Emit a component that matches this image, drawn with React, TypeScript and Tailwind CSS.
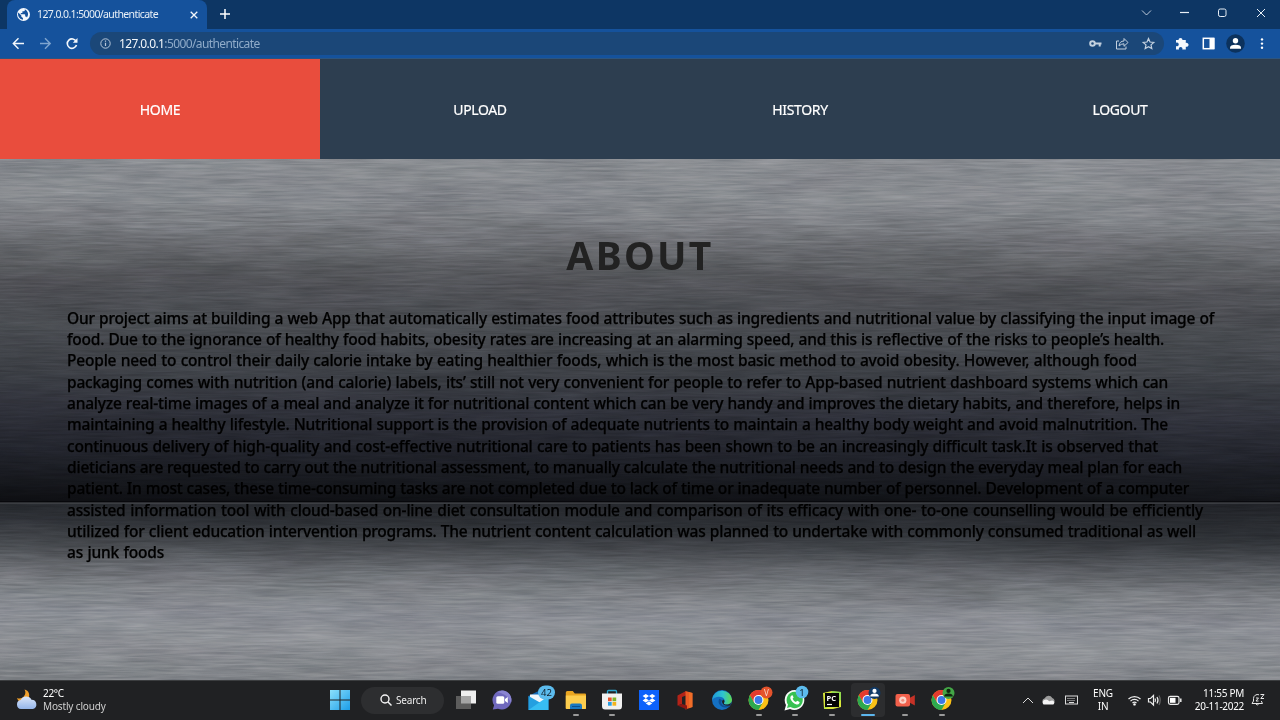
import React from "react";

type Line = [text: string, width: string];

const ABOUT_LINES: Line[] = [
  ["Our project aims at building a web App that automatically estimates food attributes such as ingredients and nutritional value by classifying the input image of", "w-[1147px]"],
  ["food. Due to the ignorance of healthy food habits, obesity rates are increasing at an alarming speed, and this is reflective of the risks to people’s health.", "w-[1097px]"],
  ["People need to control their daily calorie intake by eating healthier foods, which is the most basic method to avoid obesity. However, although food", "w-[1070px]"],
  ["packaging comes with nutrition (and calorie) labels, its’ still not very convenient for people to refer to App-based nutrient dashboard systems which can", "w-[1101px]"],
  ["analyze real-time images of a meal and analyze it for nutritional content which can be very handy and improves the dietary habits, and therefore, helps in", "w-[1113px]"],
  ["maintaining a healthy lifestyle. Nutritional support is the provision of adequate nutrients to maintain a healthy body weight and avoid malnutrition. The", "w-[1101px]"],
  ["continuous delivery of high-quality and cost-effective nutritional care to patients has been shown to be an increasingly difficult task.It is observed that", "w-[1091px]"],
  ["dieticians are requested to carry out the nutritional assessment, to manually calculate the nutritional needs and to design the everyday meal plan for each", "w-[1115px]"],
  ["patient. In most cases, these time-consuming tasks are not completed due to lack of time or inadequate number of personnel. Development of a computer", "w-[1122px]"],
  ["assisted information tool with cloud-based on-line diet consultation module and comparison of its efficacy with one- to-one counselling would be efficiently", "w-[1136px]"],
  ["utilized for client education intervention programs. The nutrient content calculation was planned to undertake with commonly consumed traditional as well", "w-[1129px]"],
  ["as junk foods", "w-[97px]"],
];

function BrushedMetal() {
  return (
    <svg className="block h-[521px] w-[1280px] [grid-area:1/1]" viewBox="0 0 1280 521" preserveAspectRatio="none">
      <defs>
        <linearGradient id="metal" gradientUnits="userSpaceOnUse" x1="0" y1="-6" x2="0" y2="340" gradientTransform="skewY(0.5)">
          <stop offset="0" stopColor="#898c91" />
          <stop offset="0.13" stopColor="#84878c" />
          <stop offset="0.21" stopColor="#74767b" />
          <stop offset="0.3" stopColor="#5e6064" />
          <stop offset="0.38" stopColor="#4f5055" />
          <stop offset="0.5" stopColor="#474a4f" />
          <stop offset="0.62" stopColor="#3d4046" />
          <stop offset="0.74" stopColor="#2f313a" />
          <stop offset="0.86" stopColor="#20222a" />
          <stop offset="0.95" stopColor="#15171c" />
          <stop offset="1" stopColor="#0d0e12" />
        </linearGradient>
        <linearGradient id="metalLow" gradientUnits="userSpaceOnUse" x1="0" y1="330" x2="0" y2="516" gradientTransform="skewY(0.8)">
          <stop offset="0" stopColor="#212328" />
          <stop offset="0.16" stopColor="#2d3035" />
          <stop offset="0.27" stopColor="#44474c" />
          <stop offset="0.38" stopColor="#606368" />
          <stop offset="0.5" stopColor="#7b7e83" />
          <stop offset="0.65" stopColor="#8a8d94" />
          <stop offset="0.8" stopColor="#8c8f94" />
          <stop offset="1" stopColor="#7f8287" />
        </linearGradient>
        <filter id="brush" x="0" y="0" width="100%" height="100%" colorInterpolationFilters="sRGB">
          <feTurbulence type="fractalNoise" baseFrequency="0.024 0.45" numOctaves="3" seed="4" />
          <feColorMatrix values="1.1 0.1 0 0 -0.1  1.05 0.1 0.05 0 -0.1  1.05 0.1 0.05 0 -0.1  0 0 0 0 1" />
        </filter>
        <filter id="cloud" x="0" y="0" width="100%" height="100%" colorInterpolationFilters="sRGB">
          <feTurbulence type="fractalNoise" baseFrequency="0.008 0.04" numOctaves="3" seed="9" />
          <feColorMatrix values="1 0.1 0 0 -0.05  1 0 0.1 0 -0.05  1 0 0 0 0  0 0 0 0 1" />
        </filter>
      </defs>
      <rect width="1280" height="345" fill="url(#metal)" />
      <rect y="344" width="1280" height="177" fill="url(#metalLow)" />
      <rect width="667" height="521" filter="url(#brush)" className="opacity-15 mix-blend-overlay" />
      <rect x="667" width="613" height="521" filter="url(#brush)" className="opacity-15 mix-blend-overlay" />
      <rect width="1280" height="521" filter="url(#cloud)" className="opacity-10 mix-blend-overlay" />
      <rect y="342" width="1280" height="1.500" fill="#030406" opacity="0.6" />
      <rect y="343.500" width="1280" height="1" fill="#55585b" opacity="0.9" />
      <rect y="43" width="667" height="1" fill="#969a9e" opacity="0.25" />
    </svg>
  );
}

function Chrome({ children }: { children?: React.ReactNode }) {
  return (
    <svg className="size-6 overflow-visible" viewBox="0 0 24 24">
      <circle cx="11.500" cy="12" r="10" fill="#fbc116" />
      <path d="M2.900 7A10 10 0 0 0 11.500 22L15.800 14.500 11.500 12 7.200 14.500Z" fill="#2da94f" />
      <path d="M2.900 7A10 10 0 0 1 20.200 7H11.500L7.200 14.500Z" fill="#e33b2e" />
      <circle cx="11.500" cy="12" r="5" fill="#fff" />
      <circle cx="11.500" cy="12" r="3.900" fill="#3b78e7" />
      {children}
    </svg>
  );
}

function Person({ fill, body }: { fill: string; body: string }) {
  return (
    <g>
      <circle cx="18.500" cy="5" r="6" fill={fill} />
      <circle cx="18.500" cy="2.900" r="2.100" fill={body} />
      <path d="M14.200 8.400Q14.400 5.600 18.500 5.600T22.800 8.400Z" fill={body} />
    </g>
  );
}

function TaskIcon({ children, bar, active }: { children: React.ReactNode; bar?: boolean; active?: boolean }) {
  return (
    <div className="grid h-[38px] w-[36.6px] place-items-center">
      <div className={active ? "grid h-[34px] w-[34px] place-items-center rounded bg-[#2c2d2f] [grid-area:1/1]" : "grid h-[34px] w-[34px] place-items-center [grid-area:1/1]"}>{children}</div>
      {bar && <div className={active ? "mb-[3px] h-[2.500px] w-[14px] self-end rounded-full bg-[#5cb5ec] [grid-area:1/1]" : "mb-[3px] h-[2.500px] w-[6px] self-end rounded-full bg-[#9a9a9a] [grid-area:1/1]"} />}
    </div>
  );
}

function TitleBar() {
  return (
    <div className="flex h-[29px] items-stretch bg-[#0d3664]">
      <div className="ml-[7px] flex w-[200px] items-center rounded-t-lg bg-[#15529c] pr-[9px] pl-[10px]">
        <svg className="size-[13px]" viewBox="0 0 24 24">
          <circle cx="12" cy="12" r="12" fill="#f4f8fd" />
          <path d="M2.4 8.5 8 14v2.2l3 2.4v3A10 10 0 0 1 2.4 8.500Z M14.500 2.400v1.300c0 1.300-1 2.300-2.200 2.300h-2.300v2.300c0 .7-.5 1-1 1h-2v2.200h7c.6 0 1.100.5 1.100 1.100v3.200h1.100c1 0 1.900.7 2.200 1.600A10 10 0 0 0 14.500 2.400Z" fill="#15529c" />
        </svg>
        <span className="ml-[7px] w-[121px] text-[10.500px] tracking-[-0.61px] whitespace-nowrap text-[#e8f0f8]">127.0.0.1:5000/authenticate</span>
        <svg className="ml-auto size-[8px]" viewBox="0 0 8 8" stroke="#f2f6fb" strokeWidth="1.300">
          <path d="M.7.7l6.600 6.600M7.300.7.7 7.300" />
        </svg>
      </div>
      <svg className="mt-[9px] ml-[13px] size-[10px]" viewBox="0 0 10 10" stroke="#fff" strokeWidth="1.500">
        <path d="M5 0v10M0 5h10" />
      </svg>
      <svg className="ml-auto h-[29px] w-[140px]" viewBox="1140 0 140 29" fill="none" stroke="#e8eff6" strokeWidth="1">
        <path d="M1142 10.500l4.500 4.500 4.500-4.500" opacity=".8" />
        <path d="M1180 12.500h9" strokeWidth="1.200" />
        <rect x="1218.500" y="9" width="7.500" height="7.500" rx="1.700" />
        <path d="M1257 9l8 8M1265 9l-8 8" />
      </svg>
    </div>
  );
}

function Toolbar() {
  return (
    <div className="flex h-[30px] items-center border-b border-[#2c5580] bg-[#15529c]">
      <svg className="h-[29px] w-[90px]" viewBox="0 29 90 29" fill="none" strokeWidth="1.400">
        <path d="M24 43.500H13.500M18.500 38.300l-5.200 5.200 5.200 5.200" stroke="#f4f8fc" />
        <path d="M40 43.500h10M45 38.300l5.200 5.200-5.200 5.200" stroke="#7fa5cf" />
        <path d="M76.200 41.500a4.700 4.700 0 1 0 .3 3.500" stroke="#f4f8fc" strokeWidth="1.600" />
        <path d="M77.500 38v4.700h-4.700z" fill="#f4f8fc" />
      </svg>
      <div className="flex h-[23px] w-[1074px] items-center rounded-full bg-[#1b4778]">
        <svg className="ml-[10px] size-[11px]" viewBox="0 0 11 11" fill="none" stroke="#b7c7da">
          <circle cx="5.500" cy="5.500" r="4.700" />
          <path d="M5.500 4.800v3.300M5.500 2.600v1.200" strokeWidth="1.200" />
        </svg>
        <span className="ml-[8px] text-[12px] tracking-[-0.61px] whitespace-nowrap text-[#8fabc9]">
          <span className="text-[#f3f7fb]">127.0.0.1</span>:5000/authenticate
        </span>
        <svg className="ml-auto h-[23px] w-[84px]" viewBox="1080 32 84 23" fill="none" stroke="#c3d0de">
          <circle cx="1092.500" cy="43.500" r="2.300" strokeWidth="2" />
          <path d="M1095 43.500h6.500M1099.700 43.500v3" strokeWidth="2" />
          <path d="M1119 41h-2.500v8h9.500v-2.500" />
          <path d="M1119 46q.5-5 5-5v-2.500l4 4-4 3.800v-2.500q-3 0-5 2.200Z" />
          <path d="M1148.500 38.600l1.500 3.400 3.800.4-2.800 2.500.8 3.700-3.300-1.900-3.300 1.900.8-3.700-2.800-2.500 3.800-.4Z" strokeWidth="1.200" />
        </svg>
      </div>
      <svg className="ml-auto h-[29px] w-[115px]" viewBox="1165 29 115 29">
        <path d="M1176 40h2.500a2 2 0 1 1 4 0h3.300v3a2 2 0 1 1 0 3.700v2.800h-3.500a1.800 1.800 0 1 0-3.300 0H1176v-3.400a1.900 1.900 0 1 0 0-3.400Z" fill="#f6f9fd" />
        <rect x="1203.300" y="38.300" width="10.400" height="10.400" fill="none" stroke="#fff" strokeWidth="1.500" />
        <rect x="1209.500" y="38" width="5" height="11" fill="#fff" />
        <circle cx="1235.500" cy="43.500" r="9.300" fill="#0c325d" />
        <circle cx="1235.500" cy="40.800" r="2.700" fill="#fff" />
        <path d="M1230 48.700v-1q0-2.900 5.500-2.900t5.500 2.900v1Z" fill="#fff" />
        <circle cx="1262" cy="39.400" r="1.200" fill="#fff" />
        <circle cx="1262" cy="43.600" r="1.200" fill="#fff" />
        <circle cx="1262" cy="47.800" r="1.200" fill="#fff" />
      </svg>
    </div>
  );
}

function Taskbar() {
  return (
    <footer className="flex h-10 items-center border-t border-[#3b3d3f] bg-[#202123] pb-px text-white">
      <div className="flex w-[322px] items-center pl-4">
        <svg className="size-[22px]" viewBox="0 0 22 22">
          <defs>
            <linearGradient id="cl" x2="0" y2="1">
              <stop stopColor="#dbe7fb" />
              <stop offset="1" stopColor="#94b5ea" />
            </linearGradient>
          </defs>
          <path d="M8.500 0.500A6 6 0 0 1 1 9a6 6 0 0 0 11 1 6 6 0 0 0-3.500-9.500Z" fill="#f0a02c" />
          <path d="M5 20a4.500 4.500 0 0 1-.3-8.900 6 6 0 0 1 10.800-.3A4.700 4.700 0 0 1 17 20Z" fill="url(#cl)" />
        </svg>
        <div className="ml-[5px] text-[10px] leading-[13px] tracking-[-0.15px]">
          <div className="tracking-[-0.3px] text-white">22°C</div>
          <div className="text-[#cfcfcf]">Mostly cloudy</div>
        </div>
      </div>
      <div className="grid w-[36px] place-items-center">
        <svg className="size-5" viewBox="0 0 20 20">
          <defs>
            <linearGradient id="win" x2="1" y2="1">
              <stop stopColor="#8ce0fb" />
              <stop offset="1" stopColor="#1b9de8" />
            </linearGradient>
          </defs>
          <path d="M0 0h9.500v9.500H0ZM10.500 0H20v9.500h-9.500ZM0 10.500h9.500V20H0ZM10.500 10.500H20V20h-9.500Z" fill="url(#win)" />
        </svg>
      </div>
      <div className="mr-[3.500px] ml-[3px] flex h-[27px] w-[83px] items-center rounded-full bg-[#2d2e30]">
        <svg className="ml-[19px] size-[12px]" viewBox="0 0 12 12" fill="none" stroke="#f5f5f5" strokeWidth="1.400">
          <circle cx="5" cy="5" r="4" />
          <path d="M8 8l3.500 3.500" />
        </svg>
        <span className="ml-[4px] text-[10px] tracking-[-0.2px] text-[#ececec]">Search</span>
      </div>

      <TaskIcon>
        <svg className="size-[22px]" viewBox="0 0 22 22">
          <rect x="6" y="1.500" width="15" height="13" fill="#efefef" />
          <rect x="1" y="7" width="15" height="13" fill="#5c5c5c" />
          <rect x="6" y="7" width="10" height="7.500" fill="#a5a5a5" />
        </svg>
      </TaskIcon>
      <TaskIcon>
        <svg className="size-5" viewBox="0 0 20 20">
          <path d="M10 .5A9.500 9.500 0 1 1 6 18.700L.8 19.500l1.300-4.300A9.500 9.500 0 0 1 10 .5Z" fill="#6f68bd" />
          <path d="M10 .5A9.500 9.500 0 0 1 19 13q-3-9-14-11Z" fill="#8a84d2" />
          <rect x="4.300" y="6.300" width="8" height="7.400" rx="1.500" fill="#fff" />
          <path d="M13 9l2.800-2v6L13 11Z" fill="#fff" />
        </svg>
      </TaskIcon>
      <TaskIcon>
        <svg className="size-6 overflow-visible" viewBox="0 0 24 24">
          <path d="M1.500 8 11.500 3 21.500 8v14h-20Z" fill="#1369b4" />
          <path d="M3 6.500h17v8H3Z" fill="#f2f6fa" />
          <path d="M1.500 8l14 8-6 6h-8Z" fill="#249fe0" />
          <path d="M21.500 8v14h-20Z" fill="#37bdf2" />
          <rect x="11" y="-2.500" width="17" height="14" rx="7" fill="#5cbcee" />
          <text x="19.500" y="8" textAnchor="middle" fontSize="9.500" fill="#10202c">42</text>
        </svg>
      </TaskIcon>
      <TaskIcon bar>
        <svg className="size-[22px]" viewBox="0 0 22 22">
          <path d="M.8 3.500Q.8 2 2.300 2h5.500l2 2.500H20q1 0 1 1V20H.8Z" fill="#e9a521" />
          <path d="M.8 6.500H21V18.500q0 1.500-1.500 1.500h-17Q.8 20 .8 18.500Z" fill="#fccd4e" />
          <path d="M5 20v-3.500Q5 14.500 7 14.500h8q2 0 2 2V20Z" fill="#1a78c2" />
          <path d="M7 17.500h8" stroke="#0d4f8d" />
        </svg>
      </TaskIcon>
      <TaskIcon bar>
        <svg className="size-[22px]" viewBox="0 0 22 22">
          <path d="M6.500 5V2.500q0-1 1-1h7q1 0 1 1V5" fill="none" stroke="#2ba6cf" strokeWidth="1.300" />
          <path d="M1 4.500h20v12.500q0 3.500-3 3.500H4q-3 0-3-3.500Z" fill="#f1f1f1" />
          <path d="M7 8.500h3.700v3.700H7Z" fill="#e8532b" />
          <path d="M11.500 8.500h3.700v3.700h-3.700Z" fill="#7fb528" />
          <path d="M7 13h3.700v3.700H7Z" fill="#2a9fe4" />
          <path d="M11.500 13h3.700v3.700h-3.700Z" fill="#f5b31c" />
        </svg>
      </TaskIcon>
      <TaskIcon>
        <svg className="size-5" viewBox="0 0 20 20">
          <rect width="20" height="20" fill="#0d62fb" />
          <path d="M6.800 4 10 6.100 6.800 8.200 3.600 6.100ZM13.200 4l3.200 2.100-3.200 2.100L10 6.100ZM6.800 8.300 10 10.400l-3.200 2.100-3.200-2.100ZM13.200 8.300l3.200 2.100-3.200 2.100-3.200-2.100ZM10 11.300l3.200 2.100L10 15.500l-3.200-2.100Z" fill="#fff" />
        </svg>
      </TaskIcon>
      <TaskIcon>
        <svg className="size-5" viewBox="0 0 20 20">
          <path d="M2.500 5.500 11 1v4.500L7 7v7l-4.500 1.500Z" fill="#b32318" />
          <path d="M10.500 1 17.500 3v14l-7 2.500Z" fill="#ec5b24" />
          <path d="M2.500 15.500 7 14l5 1.500v4Z" fill="#8b1712" />
          <path d="M14 2l3.500 1v14l-3.500 1.200Z" fill="#f3792c" opacity=".6" />
        </svg>
      </TaskIcon>
      <TaskIcon>
        <svg className="size-5" viewBox="0 0 24 24">
          <defs>
            <linearGradient id="ed" x2="1">
              <stop stopColor="#1f9ad8" />
              <stop offset=".55" stopColor="#2fc4cf" />
              <stop offset="1" stopColor="#62d84c" />
            </linearGradient>
          </defs>
          <circle cx="12" cy="12" r="12" fill="#1470c2" />
          <path d="M.2 11A12 12 0 0 1 24 11.500c0 4-3 6-6.300 6-3 0-4-1.300-3.200-2.300C17 12 13.500 8 9 8S.5 10 .2 12.500Z" fill="url(#ed)" />
          <path d="M9 10.500c-3 4 .5 10.500 7 10.500 2.500 0 4.500-.7 6.500-2.500-1.500.6-3 .8-4.500.8-5.500 0-8.500-3.300-6-7Z" fill="#0f4f94" />
          <path d="M14.500 15.200c-.8 1 .2 2.300 3.200 2.300 2 0 4.200-.8 5.300-2.500L22 18.500q-9 1.500-10-4c0-1.500.8-2.500 1.500-3 1.600 1 1.900 2.500 1 3.700Z" fill="#202123" />
        </svg>
      </TaskIcon>
      <TaskIcon bar>
        <Chrome>
          <circle cx="19.500" cy="4.500" r="6" fill="#e4532c" />
          <text x="19.500" y="7.500" textAnchor="middle" fontSize="8" fill="#f8d8cb">V</text>
        </Chrome>
      </TaskIcon>
      <TaskIcon bar>
        <svg className="size-6 overflow-visible" viewBox="0 0 24 24">
          <path d="M11.500 2A10 10 0 1 1 7 21l-5.500 1.500L3 17A10 10 0 0 1 11.500 2Z" fill="#f7fbf8" />
          <path d="M11.500 3.800a8.200 8.200 0 1 1-4 15.300l-3.500.9 1-3.400A8.200 8.200 0 0 1 11.500 3.800Z" fill="#38c152" />
          <path d="M8.500 7.500q-1.500 1-1.200 2.800 1.200 4.500 6.200 6.200 2 .3 3-1.500l.1-1.100-2.400-1.200-1.300 1.400Q10.500 13 9.600 10.700l1-1.200-1-2.200Z" fill="#fff" />
          <circle cx="19" cy="4" r="6.300" fill="#5cbcee" />
          <text x="19" y="7.500" textAnchor="middle" fontSize="9.500" fill="#10202c">1</text>
        </svg>
      </TaskIcon>
      <TaskIcon bar>
        <svg className="size-5" viewBox="0 0 20 20">
          <path d="M1 3 10 1l9 1v15l-8 2H2Z" fill="#d9e83b" />
          <path d="M10 1 19 2v8L2 19Z" fill="#57cf5e" opacity=".55" />
          <rect x="3" y="3" width="14" height="14" fill="#050505" />
          <text x="4.500" y="10.500" fontSize="7.500" fontWeight="700" fill="#fff">PC</text>
          <path d="M5 14.500h5" stroke="#fff" strokeWidth="1.200" />
        </svg>
      </TaskIcon>
      <TaskIcon bar active>
        <Chrome>
          <Person fill="#113a66" body="#fff" />
        </Chrome>
      </TaskIcon>
      <TaskIcon bar>
        <svg className="size-5" viewBox="0 0 20 20">
          <path d="M14.500 8l5.300-3v10.500L14.500 12.500Z" fill="#c63227" />
          <rect x=".5" y="4" width="14.500" height="12.500" rx="2" fill="#f2604b" />
          <circle cx="7.800" cy="10.200" r="3.600" fill="#fbd5cb" />
          <circle cx="7.800" cy="10.200" r="1.500" fill="#f4907f" />
        </svg>
      </TaskIcon>
      <TaskIcon bar>
        <Chrome>
          <Person fill="#43a646" body="#10240f" />
        </Chrome>
      </TaskIcon>

      <svg className="ml-auto h-[38px] w-[60px]" viewBox="1020 681 60 38" fill="none" stroke="#dcdcdc">
        <path d="M1023 703l5-5 5 5" />
        <path d="M1044.500 704a3 3 0 0 1 .2-5.800 4.300 4.300 0 0 1 7.600-.2 3.300 3.300 0 0 1 .7 6Z" fill="#9b9b9b" stroke="none" />
        <path d="M1043.500 704.500a2.800 2.800 0 0 1 .7-4.500q3-1.200 5 1.200l3-.8a2.300 2.300 0 0 1 1.200 4.100Z" fill="#f4f4f4" stroke="none" />
        <rect x="1065.500" y="696" width="12" height="8" />
        <path d="M1067.500 698.500h8M1067.500 700.500h8" strokeDasharray="1 1" />
        <path d="M1069 702.500h5" />
      </svg>
      <div className="w-[46px] text-center text-[10px] leading-[13px] tracking-[-0.2px]">
        <div>ENG</div>
        <div>IN</div>
      </div>
      <svg className="h-[38px] w-[62px]" viewBox="1126 681 62 38" fill="none" stroke="#ececec" strokeWidth="1.200">
        <path d="M1128.500 699a8.600 8.600 0 0 1 12 0M1130.500 701.100a5.700 5.700 0 0 1 8 0M1132.500 703a2.900 2.900 0 0 1 4 0" />
        <circle cx="1134.500" cy="704.400" r="1.200" fill="#fff" stroke="none" />
        <path d="M1148.500 698.500h2l3-3v9.500l-3-3h-2Z" />
        <path d="M1155 698.500q1 1.700 0 3.500M1157 697q2 3.300 0 6.500" />
        <path d="M1159 695.500q2.500 4.800 0 9.500" stroke="#666" />
        <rect x="1168.500" y="696.300" width="10.500" height="8" rx="1.800" />
        <rect x="1170" y="697.800" width="5.500" height="5" fill="#fff" stroke="none" />
        <path d="M1180.800 698.500v3.500" strokeWidth="1.500" />
      </svg>
      <div className="w-[56px] text-right text-[10px] leading-[13px] tracking-[-0.3px] whitespace-nowrap">
        <div>11:55 PM</div>
        <div>20-11-2022</div>
      </div>
      <svg className="mr-[15px] ml-[7px] h-[14px] w-[14px]" viewBox="0 0 14 14" fill="none" stroke="#e6e6e6">
        <path d="M8 1.800A4 4 0 0 0 2.500 5.500V8L1 10.500h10.500L10.300 8" />
        <path d="M4.800 10.800q1.400 2.400 3 0M5 5h2.500L5 8h2.500M9.500 1.500H13L9.800 5.500H13" />
      </svg>
    </footer>
  );
}

const NAV = ["HOME", "UPLOAD", "HISTORY", "LOGOUT"];

export default function App() {
  return (
    <div className="flex h-[720px] w-[1280px] flex-col overflow-hidden bg-[#202123] font-['Noto_Sans','Open_Sans',sans-serif]">
      <TitleBar />
      <Toolbar />
      <nav className="grid h-[100px] grid-cols-4 bg-[#2d3e50]">
        {NAV.map((item, i) => (
          <a key={item} className={i === 0 ? "grid place-items-center bg-[#e94d3d] pt-px text-[14px] tracking-[-0.35px] text-white [-webkit-text-stroke:0.2px]" : "grid place-items-center pt-px text-[14px] tracking-[-0.35px] text-white [-webkit-text-stroke:0.2px]"}>
            {item}
          </a>
        ))}
      </nav>
      <main className="grid h-[521px] overflow-hidden">
        <BrushedMetal />
        <section className="z-10 pt-[69px] pl-[67px] [grid-area:1/1]">
          <h1 className="w-[1146px] text-center text-[39px] leading-[54px] font-bold tracking-[2.300px] text-[#222222]">ABOUT</h1>
          <div className="mt-[25.600px] text-[15.500px] leading-[21.330px] font-medium tracking-[-0.2px] text-black [-webkit-text-stroke:0.25px]">
            {ABOUT_LINES.map(([text, width]) => (
              <div key={text} className={`${width} whitespace-nowrap [text-align-last:justify]`}>
                {text}
              </div>
            ))}
          </div>
        </section>
      </main>
      <Taskbar />
    </div>
  );
}
